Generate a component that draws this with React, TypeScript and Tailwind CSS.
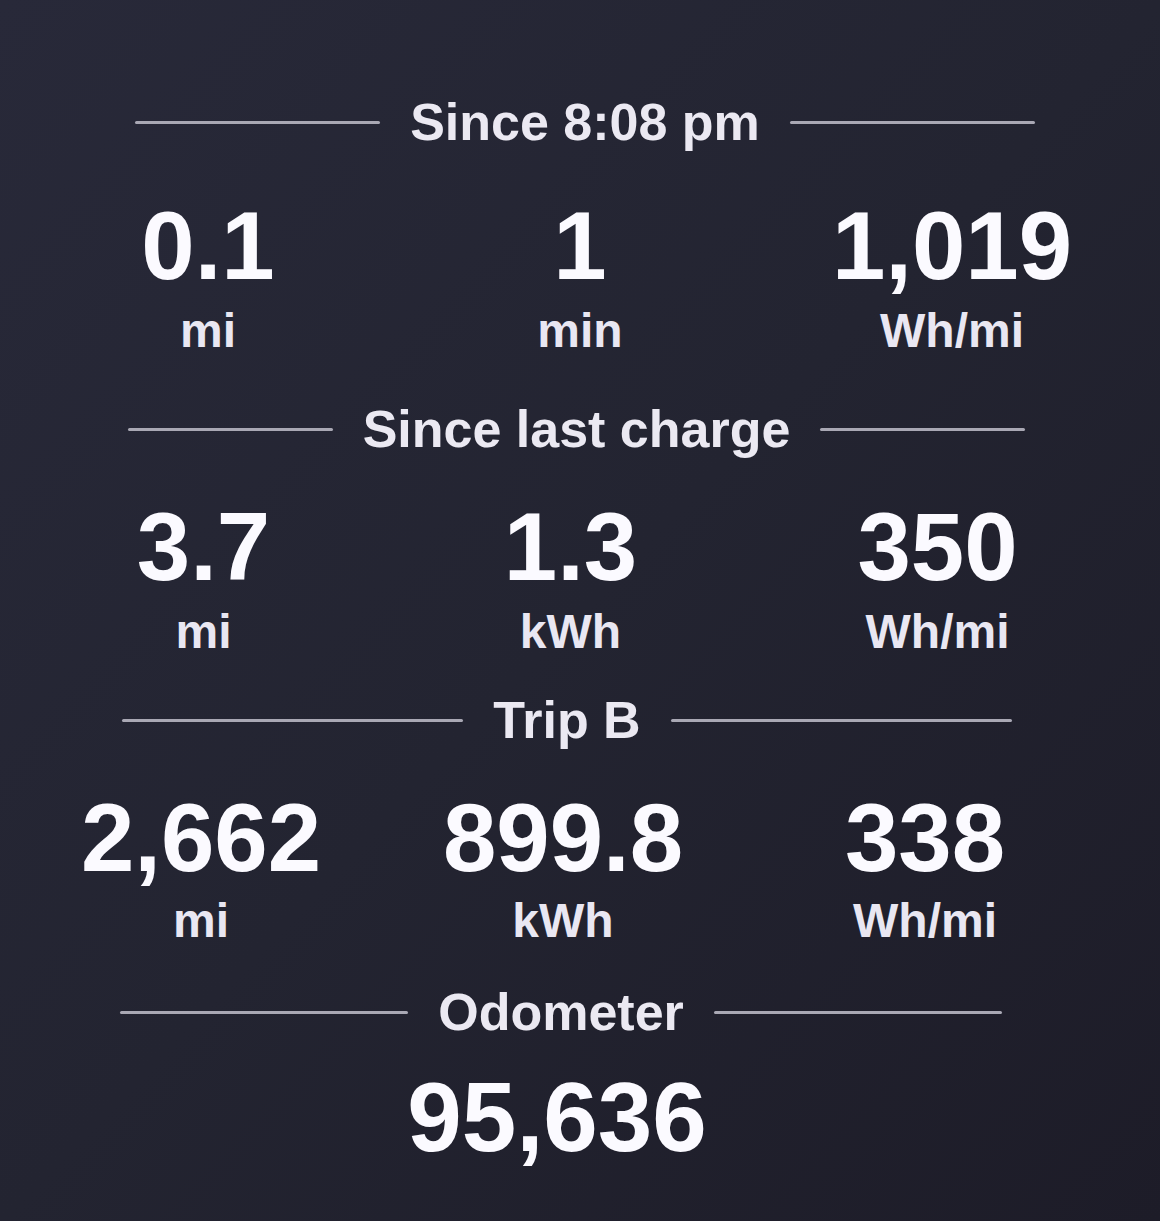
import React from 'react';

type Stat = { value: string; unit: string };

type Section = {
  title: string;
  header: string; // left edge + width of the divider row
  gapTop: string;
  valuesGap: string;
  unitsGap: string;
  grid: string; // where the three columns sit
  stats: Stat[];
};

const sections: Section[] = [
  {
    title: 'Since 8:08 pm',
    header: 'ml-[135px] w-[900px]',
    gapTop: 'mt-[92px]',
    valuesGap: 'mt-[46px]',
    unitsGap: 'mt-[13px]',
    grid: 'ml-[22px] grid-cols-[372px_372px_372px]',
    stats: [
      { value: '0.1', unit: 'mi' },
      { value: '1', unit: 'min' },
      { value: '1,019', unit: 'Wh/mi' },
    ],
  },
  {
    title: 'Since last charge',
    header: 'ml-[128px] w-[897px]',
    gapTop: 'mt-[44px]',
    valuesGap: 'mt-[40px]',
    unitsGap: 'mt-[13px]',
    grid: 'ml-[20px] grid-cols-[367px_367px_367px]',
    stats: [
      { value: '3.7', unit: 'mi' },
      { value: '1.3', unit: 'kWh' },
      { value: '350', unit: 'Wh/mi' },
    ],
  },
  {
    title: 'Trip B',
    header: 'ml-[122px] w-[890px]',
    gapTop: 'mt-[34px]',
    valuesGap: 'mt-[40px]',
    unitsGap: 'mt-[11px]',
    grid: 'ml-[20px] grid-cols-[362px_362px_362px]',
    stats: [
      { value: '2,662', unit: 'mi' },
      { value: '899.8', unit: 'kWh' },
      { value: '338', unit: 'Wh/mi' },
    ],
  },
];

const Divider: React.FC<{ title: string; className: string }> = ({ title, className }) => (
  <div className={`flex h-[60px] items-center ${className}`}>
    <div className="h-[3px] flex-1 rounded-full bg-[#a9a8b4]" />
    <span className="px-[30px] text-[52px] font-bold leading-[60px] text-[#ebe9f2]">{title}</span>
    <div className="h-[3px] flex-1 rounded-full bg-[#a9a8b4]" />
  </div>
);

export default function App() {
  return (
    <div
      className="h-[1221px] w-[1160px] overflow-hidden bg-linear-to-br from-[#282939] via-[#232431] to-[#1d1c28] text-white"
      style={{ fontFamily: '"Liberation Sans", Arial, sans-serif' }}
    >
      {sections.map((s) => (
        <div key={s.title} className={s.gapTop}>
          <Divider title={s.title} className={s.header} />
          <div className={`grid ${s.grid} ${s.valuesGap}`}>
            {s.stats.map((st) => (
              <div key={st.unit + st.value} className="text-center text-[96px] font-bold leading-none text-[#fbfaff]">
                {st.value}
              </div>
            ))}
          </div>
          <div className={`grid ${s.grid} ${s.unitsGap}`}>
            {s.stats.map((st) => (
              <div key={st.unit + st.value} className="text-center text-[48px] font-bold leading-none text-[#e9e7f2]">
                {st.unit}
              </div>
            ))}
          </div>
        </div>
      ))}

      <div className="mt-[37px]">
        <Divider title="Odometer" className="ml-[120px] w-[882px]" />
        <div className="mt-[26px] pr-[46px] text-center text-[98px] font-bold leading-none text-[#fbfaff]">
          95,636
        </div>
      </div>
    </div>
  );
}
